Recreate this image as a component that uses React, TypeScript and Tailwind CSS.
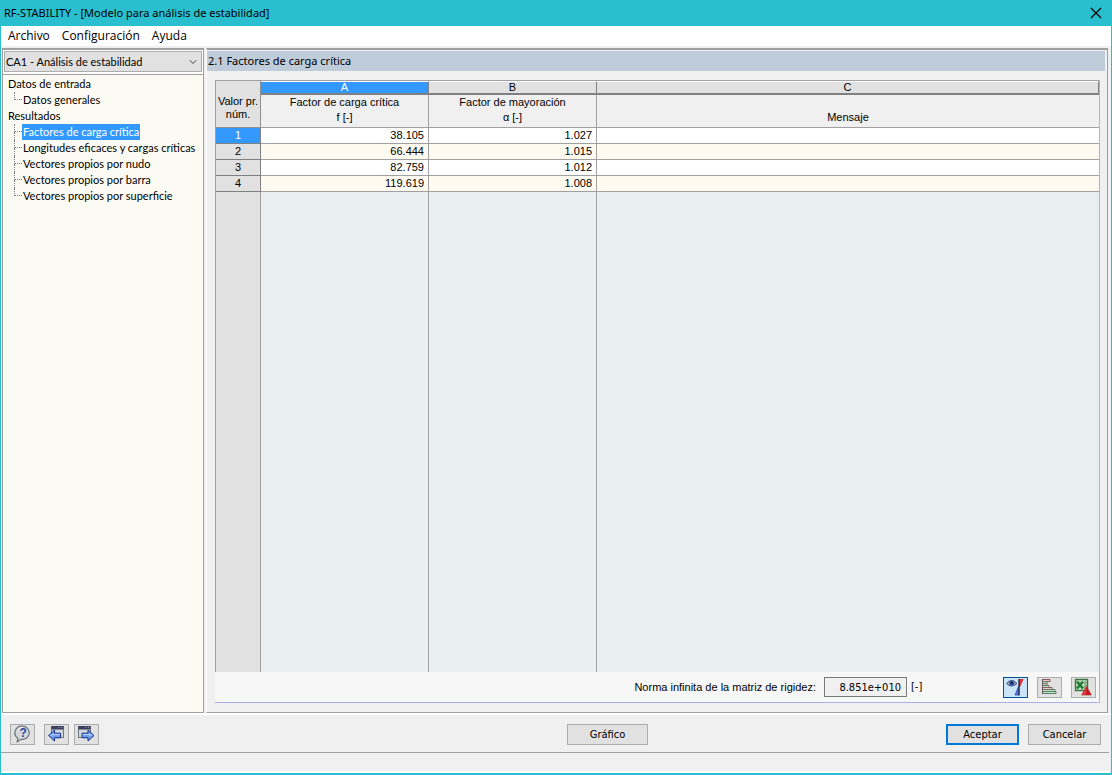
import React, { useState } from 'react';
import { ChevronDown } from 'lucide-react';

interface ResultRow {
  id: number;
  factor: string;
  amplification: string;
  message: string;
}

const rows: ResultRow[] = [
  { id: 1, factor: '38.105', amplification: '1.027', message: '' },
  { id: 2, factor: '66.444', amplification: '1.015', message: '' },
  { id: 3, factor: '82.759', amplification: '1.012', message: '' },
  { id: 4, factor: '119.619', amplification: '1.008', message: '' },
];

const tree = [
  { title: 'Datos de entrada', items: ['Datos generales'] },
  {
    title: 'Resultados',
    items: [
      'Factores de carga crítica',
      'Longitudes eficaces y cargas críticas',
      'Vectores propios por nudo',
      'Vectores propios por barra',
      'Vectores propios por superficie',
    ],
  },
];

const HelpIcon = () => (
  <svg width="23" height="19" viewBox="0 0 23 19">
    <path d="M11.5 1.2a6.8 6.6 0 1 1-1.2 13.1L6.2 16.8l.7-3.6A6.8 6.6 0 0 1 11.5 1.2Z" fill="#d3d8dc" stroke="#6d7377" strokeWidth="1.2" />
    <path d="M7 5.5A5.5 5 0 0 1 11.5 2.4" stroke="#fff" fill="none" />
    <text x="8.4" y="12" fontSize="12" fontWeight="700" fill="#24479f" fontFamily="Liberation Sans, sans-serif">?</text>
  </svg>
);

const WindowShape = ({ x }: { x: number }) => (
  <>
    <rect x={x} y="1.5" width="12" height="11" fill="#d3d6dc" stroke="#6f7480" />
    <rect x={x} y="1" width="12" height="3.5" fill="#39415f" />
    <path d={`M${x + 7} 2.5h1M${x + 9.5} 2.5h1`} stroke="#8f98b5" />
  </>
);

const PrevIcon = () => (
  <svg width="23" height="19" viewBox="0 0 23 19">
    <WindowShape x={6.5} />
    <path d="M3.5 10.5 9.5 5v3.2h6v4.6h-6V16Z" fill="#6f9cf0" stroke="#17348c" />
    <path d="M5.5 10.2 9.8 9.5h5" stroke="#c6dbff" fill="none" />
  </svg>
);

const NextIcon = () => (
  <svg width="23" height="19" viewBox="0 0 23 19">
    <WindowShape x={3.5} />
    <path d="M19 10.5 13 5v3.2H7v4.6h6V16Z" fill="#6f9cf0" stroke="#17348c" />
    <path d="M17 10.2 12.8 9.5h-5" stroke="#c6dbff" fill="none" />
  </svg>
);

const EyeChartIcon = () => (
  <svg width="23" height="19" viewBox="0 0 23 19">
    <path d="M2.5 5.5Q7.5-.5 13 5.5 7.5 10.5 2.5 5.5Z" fill="#a9b6d4" stroke="#3c507e" />
    <circle cx="7.8" cy="5" r="2.7" fill="#3a5aa6" />
    <circle cx="7.8" cy="5" r="1.2" fill="#101c40" />
    <path d="M15.5 9V1.5H19Z" fill="#e8333a" stroke="#d01824" strokeWidth=".8" />
    <path d="M14.5 8.5V17H11Z" fill="#5a7ee8" stroke="#2848c4" strokeWidth=".8" />
    <path d="M15 1v16.5" stroke="#222b40" strokeWidth="1.4" />
  </svg>
);

const BarsIcon = () => (
  <svg width="23" height="19" viewBox="0 0 23 19">
    <path d="M4 1.5h8v2H4M4 5.5h5v2H4" fill="#f6c6c9" stroke="#8d5b60" />
    <path d="M4 3.5h5v2H4M4 7.5h7v2H4" fill="#bfe8c6" stroke="#5f7a66" />
    <path d="M4 9.5h10v2H4" fill="#f6c6c9" stroke="#8d5b60" />
    <path d="M4 11.5h13v2H4M4 13.5h14v2H4" fill="#bfe8c6" stroke="#5f7a66" />
    <path d="M4.5 1v15" stroke="#6a5a5e" />
  </svg>
);

const ExcelIcon = () => (
  <svg width="23" height="19" viewBox="0 0 23 19">
    <rect x="3.5" y="1.5" width="12" height="11" fill="#c5dec5" stroke="#39733f" strokeWidth="1.4" />
    <path d="M13 3v9M13 5h2M13 8h2" stroke="#5e9864" />
    <path d="m5 3.5 6 7m0-7-6 7" stroke="#1d7c31" strokeWidth="2.6" />
    <path d="m14.5 8.5 4.8 8.5H9.7Z" fill="#e8393a" stroke="#b5191e" strokeWidth=".6" />
    <path d="M14.5 9v8h4.5Z" fill="#b5191e" />
  </svg>
);

const iconButton = 'flex h-[21px] w-[25px] items-center justify-center border border-[#adadad] bg-[#e1e1e1]';
const pushButton = 'h-[21px] border border-[#adadad] bg-[#e1e1e1] text-center leading-none';
const headCell = 'h-[14px] border-r border-b-2 border-[#808080] border-t border-t-white p-0 text-center font-normal leading-[11px]';

export default function App() {
  const [activeItem, setActiveItem] = useState('Factores de carga crítica');
  const [selectedRow, setSelectedRow] = useState(1);

  return (
    <div className="flex h-screen min-h-96 flex-col border-x border-b-2 border-[#29bfce] bg-[#f0f0f0] font-['DejaVu_Sans_Condensed','Liberation_Sans',sans-serif] text-[11px] text-black">
      <header className="flex h-[26px] shrink-0 items-center justify-between bg-[#29bfce] pr-2 pl-[3px] font-['Noto_Sans',sans-serif]">
        <h1>RF-STABILITY - [Modelo para análisis de estabilidad]</h1>
        <button aria-label="Cerrar" className="p-px">
          <svg width="12" height="12" viewBox="0 0 12 12" stroke="#000" strokeWidth="1.2">
            <path d="m1 1 10 10M11 1 1 11" />
          </svg>
        </button>
      </header>

      <nav className="flex h-5 shrink-0 items-center gap-3 bg-white px-[7px] font-['Open_Sans',sans-serif] text-xs">
        <button>Archivo</button>
        <button>Configuración</button>
        <button>Ayuda</button>
      </nav>

      <main className="flex min-h-0 flex-1 gap-[2px] border-b-2 border-white px-px pt-[2px]">
        <aside className="flex w-[202px] shrink-0 flex-col border-t-2 border-r border-b border-l border-[#a0a0a0] bg-[#fbfbf3] font-[Lato,'Liberation_Sans',sans-serif]">
          <div className="relative border-b border-[#a0a0a0] bg-white px-px pt-px pb-[2px]">
            <select
              aria-label="Caso de análisis"
              className="h-[21px] w-full appearance-none border border-[#adadad] bg-[#e1e1e1] pt-px pr-5 pl-px"
            >
              <option>CA1 - Análisis de estabilidad</option>
            </select>
            <ChevronDown className="pointer-events-none absolute top-[6px] right-1 h-3 w-3 text-[#444]" strokeWidth={2} />
          </div>
          <div className="pt-px pl-[5px] leading-4 whitespace-nowrap">
            {tree.map(group => (
              <div key={group.title}>
                <p>{group.title}</p>
                <ul className="pl-[6px]">
                  {group.items.map((item, i) => (
                    <li key={item} className="flex h-4">
                      <span className="flex w-2 shrink-0 flex-col">
                        <span className="h-2 border-b border-l border-dotted border-[#808080]" />
                        {i < group.items.length - 1 && <span className="h-2 border-l border-dotted border-[#808080]" />}
                      </span>
                      <a
                        href="#"
                        onClick={() => setActiveItem(item)}
                        className={item === activeItem ? 'bg-[#3399ff] px-px text-white' : 'px-px'}
                      >
                        {item}
                      </a>
                    </li>
                  ))}
                </ul>
              </div>
            ))}
          </div>
        </aside>

        <section className="mr-[2px] flex min-w-0 flex-1 flex-col border-t-2 border-r border-b border-[#a0a0a0] border-l border-l-white">
          <h2 className="mt-px mr-[2px] h-5 shrink-0 bg-[#bfccda] pl-px font-['Noto_Sans',sans-serif] leading-5">
            2.1 Factores de carga crítica
          </h2>

          <div className="mt-[9px] mr-[7px] mb-[9px] ml-2 flex min-h-0 flex-1 flex-col border-r border-b border-[#b0aee8] bg-[#f7f7f7]">
            <div className="min-h-0 flex-1">
              <table className="h-full w-full table-fixed border-separate border-spacing-0 border-t border-l border-[#a0a0a0] font-['Liberation_Sans',sans-serif]">
                <colgroup>
                  <col className="w-[45px]" />
                  <col className="w-[168px]" />
                  <col className="w-[168px]" />
                  <col />
                </colgroup>
                <thead>
                  <tr className="h-[14px]">
                    <th rowSpan={2} className="border-r border-b border-[#909090] bg-[#e1e1e1] p-0 pt-2 leading-[13px] font-normal">
                      Valor pr.
                      <br />
                      núm.
                    </th>
                    <th className={`${headCell} bg-[#3399ff] text-white`}>A</th>
                    <th className={`${headCell} bg-[#e1e1e1]`}>B</th>
                    <th className={`${headCell} bg-[#e1e1e1]`}>C</th>
                  </tr>
                  <tr className="h-[33px] bg-[#f0f0f0] leading-[15px]">
                    <th className="border-r border-b border-[#a0a0a0] p-0 align-top font-normal">
                      Factor de carga crítica
                      <br />f [-]
                    </th>
                    <th className="border-r border-b border-[#a0a0a0] p-0 align-top font-normal">
                      Factor de mayoración
                      <br />α [-]
                    </th>
                    <th className="border-b border-[#a0a0a0] p-0 pb-[2px] align-bottom font-normal">Mensaje</th>
                  </tr>
                </thead>
                <tbody>
                  {rows.map(row => (
                    <tr
                      key={row.id}
                      onClick={() => setSelectedRow(row.id)}
                      className="h-4 bg-white leading-[15px] even:bg-[#fffaf0]"
                    >
                      <th
                        className={
                          row.id === selectedRow
                            ? 'border-r border-b border-[#808080] bg-[#3399ff] p-0 font-normal text-white'
                            : 'border-r border-b border-[#808080] bg-[#e1e1e1] p-0 font-normal'
                        }
                      >
                        {row.id}
                      </th>
                      <td className="border-r border-b border-[#a0a0a0] p-0 pr-1 text-right">{row.factor}</td>
                      <td className="border-r border-b border-[#a0a0a0] p-0 pr-1 text-right">{row.amplification}</td>
                      <td className="border-b border-[#a0a0a0] p-0">{row.message}</td>
                    </tr>
                  ))}
                  <tr className="bg-[#e9eeee]">
                    <td className="border-r border-[#a0a0a0] bg-[#e1e1e1] p-0" />
                    <td className="border-r border-[#a0a0a0] p-0" />
                    <td className="border-r border-[#a0a0a0] p-0" />
                    <td className="p-0" />
                  </tr>
                </tbody>
              </table>
            </div>

            <div className="flex h-[30px] shrink-0 items-center pr-[3px]">
              <label htmlFor="norm" className="ml-auto font-['Liberation_Sans',sans-serif]">
                Norma infinita de la matriz de rigidez:
              </label>
              <input
                id="norm"
                readOnly
                value="8.851e+010"
                className="ml-2 h-5 w-[83px] border border-[#7a7a7a] bg-[#f0f0f0] pr-[5px] text-right"
              />
              <span className="ml-1 w-3">[-]</span>
              <div className="ml-20 flex gap-[9px]">
                <button aria-label="Mostrar gráfico" className="flex h-[21px] w-[25px] items-center justify-center border border-[#005499] bg-[#cce4f7]">
                  <EyeChartIcon />
                </button>
                <button aria-label="Diagrama de barras" className={iconButton}>
                  <BarsIcon />
                </button>
                <button aria-label="Exportar a Excel" className={iconButton}>
                  <ExcelIcon />
                </button>
              </div>
            </div>
          </div>
        </section>
      </main>

      <footer className="shrink-0">
        <div className="flex items-center pt-[9px] pr-[10px] pb-[7px] pl-[9px]">
          <div className="flex flex-1 gap-[5px]">
            <button aria-label="Ayuda" className={`${iconButton} mr-1`}>
              <HelpIcon />
            </button>
            <button aria-label="Anterior" className={iconButton}>
              <PrevIcon />
            </button>
            <button aria-label="Siguiente" className={iconButton}>
              <NextIcon />
            </button>
          </div>
          <button className={`${pushButton} mr-[-104px] w-[81px]`}>Gráfico</button>
          <div className="flex flex-1 justify-end gap-[9px]">
            <button className="h-[21px] w-[73px] border-2 border-[#0078d7] bg-[#e1e1e1] leading-none">Aceptar</button>
            <button className={`${pushButton} w-[73px]`}>Cancelar</button>
          </div>
        </div>
        <div className="mr-[2px] h-[21px] border-t border-[#a0a0a0] border-b-2 border-b-white" />
      </footer>
    </div>
  );
}
